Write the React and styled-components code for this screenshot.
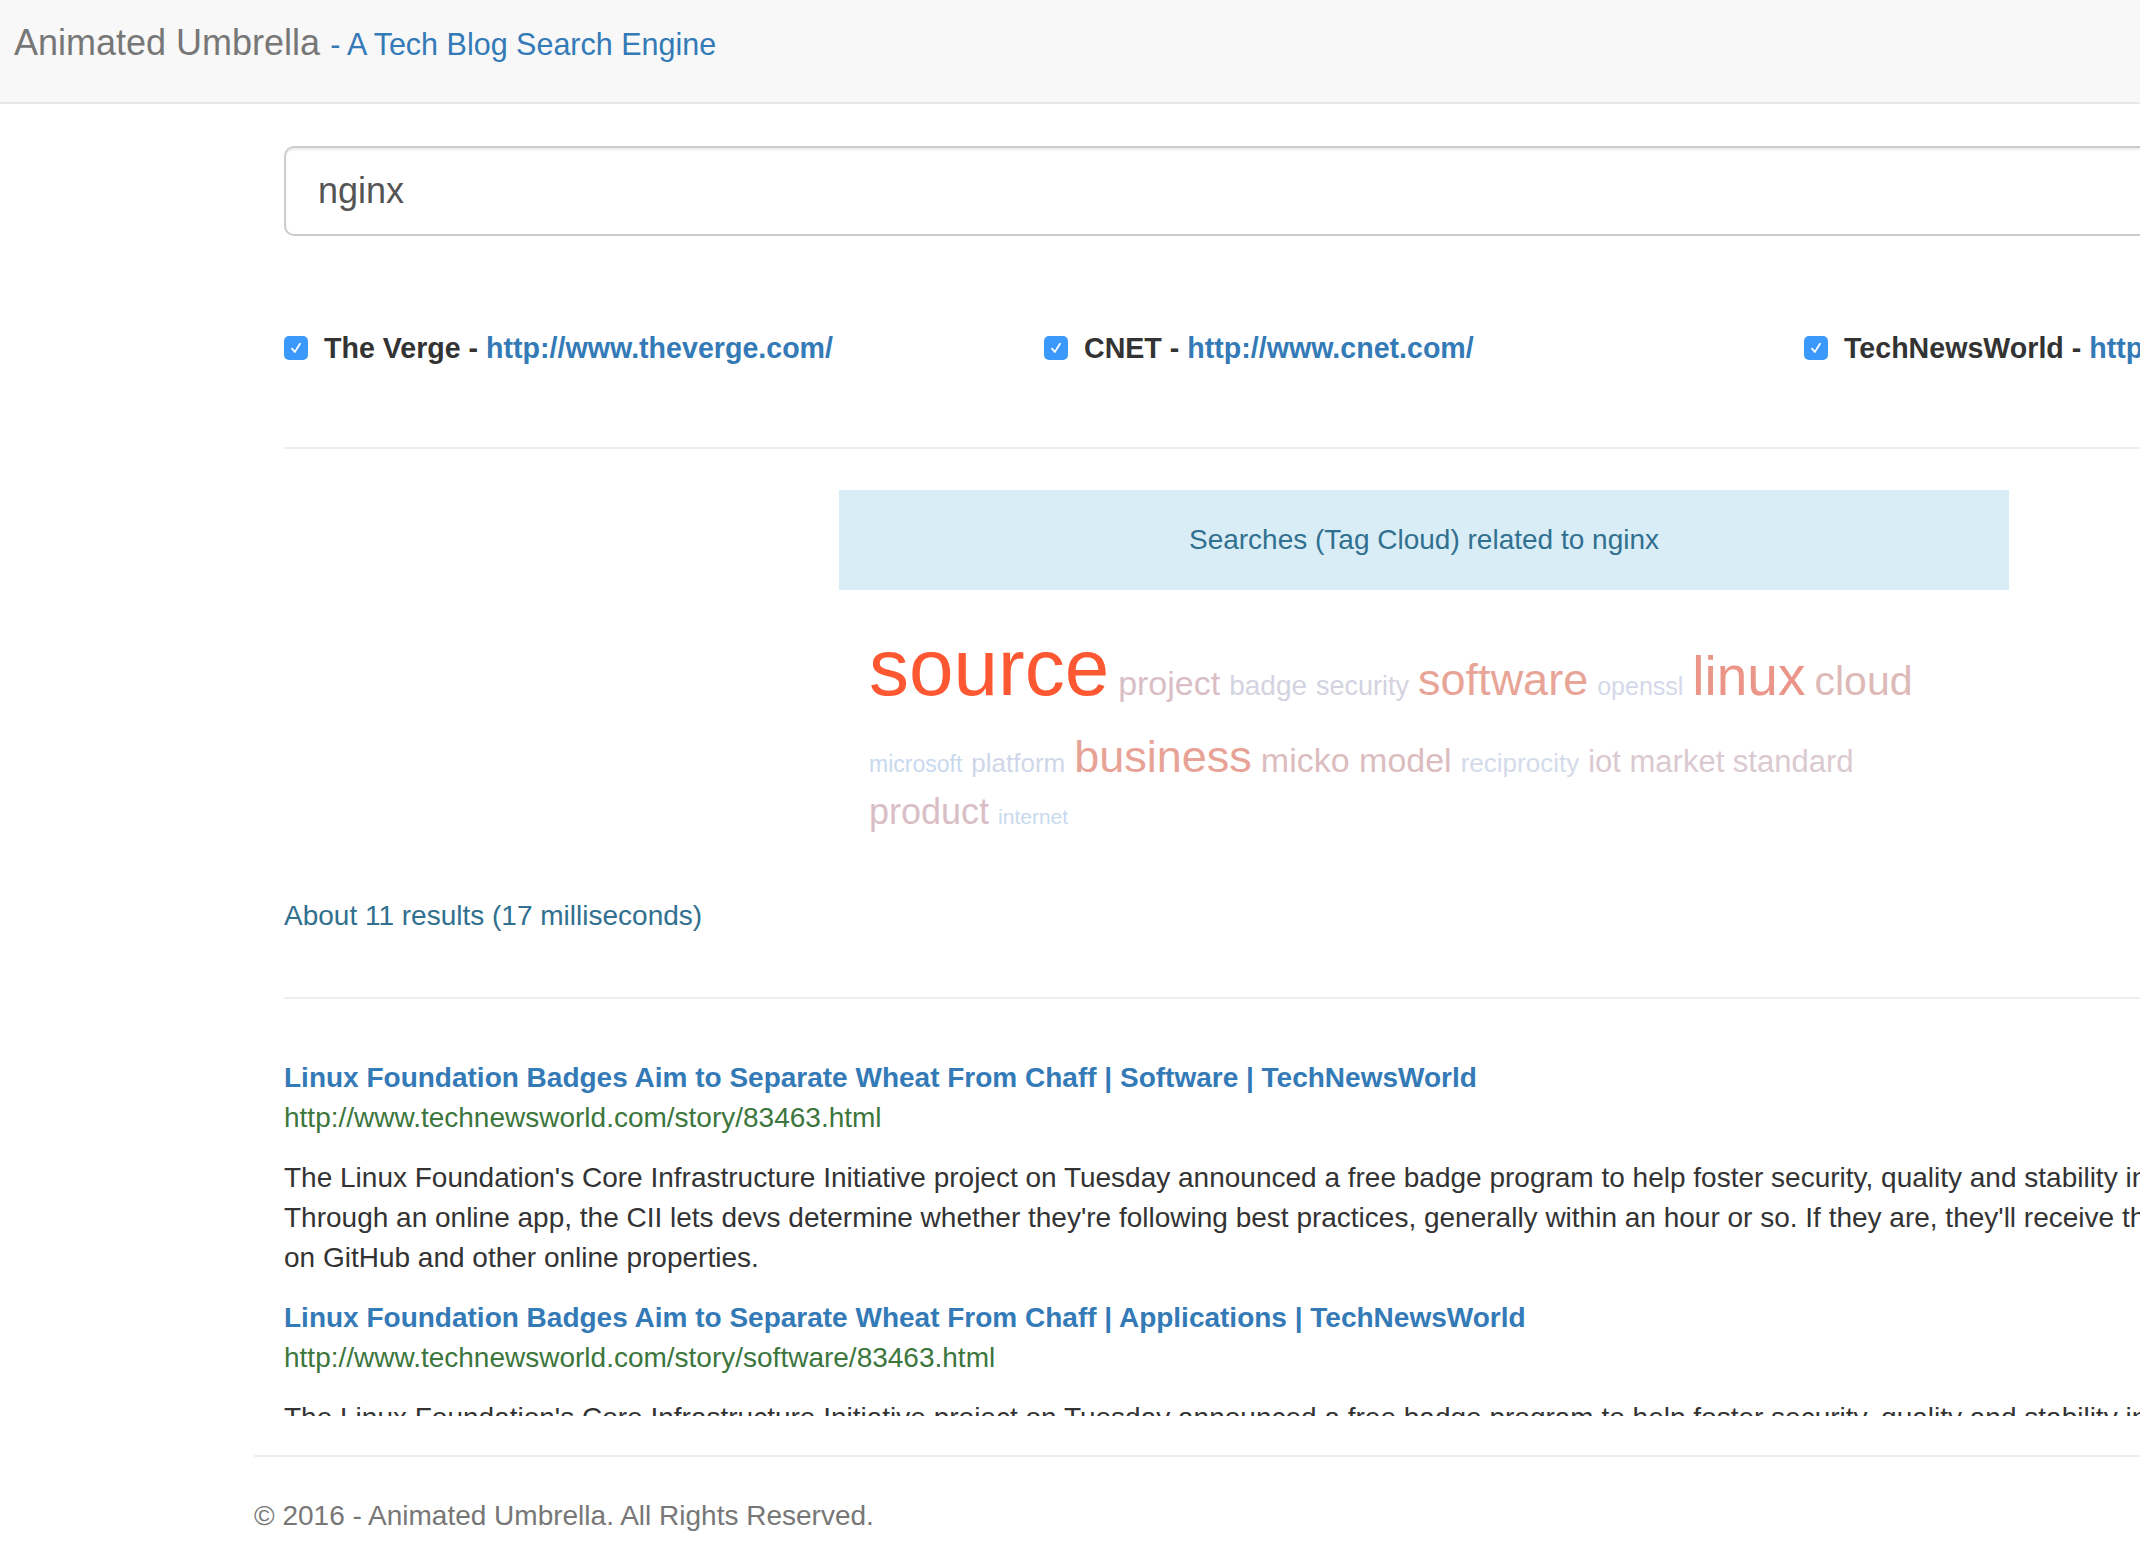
import React from "react";
import styled, { createGlobalStyle } from "styled-components";

const GlobalStyle = createGlobalStyle`
  * {
    box-sizing: border-box;
  }
  html,
  body {
    margin: 0;
    padding: 0;
    overflow: hidden;
    background: #fff;
  }
  body {
    font-family: "Liberation Sans", Helvetica, Arial, sans-serif;
    font-size: 28px;
    line-height: 40px;
    color: #333;
  }
`;

const Navbar = styled.nav`
  height: 104px;
  background-color: #f8f8f8;
  border-bottom: 2px solid #e7e7e7;
  padding: 23px 0 0 14px;
`;

const Brand = styled.a`
  display: block;
  font-size: 36px;
  line-height: 40px;
  color: #777;
  text-decoration: none;
  white-space: nowrap;
`;

const Tagline = styled.span`
  font-size: 30.5px;
  color: #337ab7;
`;

const Container = styled.div`
  width: 2340px;
  margin-left: 224px;
  padding: 0 30px;
`;

const Main = styled.main`
  padding: 0 30px;
`;

const SearchInput = styled.input`
  display: block;
  width: 100%;
  height: 90px;
  margin: 42px 0 0;
  padding: 0 32px;
  font: inherit;
  font-size: 36px;
  color: #555;
  background-color: #fff;
  border: 2px solid #ccc;
  border-radius: 10px;
  box-shadow: inset 0 2px 2px rgba(0, 0, 0, 0.075);
  outline: none;
`;

const Sources = styled.div`
  display: flex;
  margin: 92px -30px 0;
`;

const Source = styled.label`
  flex: 0 0 760px;
  padding: 0 30px;
  display: flex;
  align-items: center;
  gap: 16px;
  font-size: 28.6px;
  font-weight: bold;
  line-height: 40px;
  white-space: nowrap;
`;

const CheckBox = styled.span`
  flex: none;
  width: 24px;
  height: 24px;
  border-radius: 5px;
  background-color: #3b99fc;
  display: inline-flex;
  align-items: center;
  justify-content: center;
`;

const SourceLink = styled.a`
  color: #337ab7;
  text-decoration: none;
`;

const Rule = styled.hr`
  border: 0;
  border-top: 2px solid #eee;
  margin: ${(props) => props.$top}px 0 0;
`;

const TagPanel = styled.section`
  width: 1170px;
  margin: 41px 0 0 555px;
`;

const TagHeader = styled.div`
  height: 100px;
  line-height: 100px;
  background-color: #d9edf7;
  color: #31708f;
  text-align: center;
`;

const Cloud = styled.div`
  padding: 0 30px;
`;

const CloudRow = styled.div`
  display: flex;
  align-items: baseline;
  gap: 9px;
  margin-top: ${(props) => props.$top}px;
  white-space: nowrap;
`;

const Word = styled.span`
  font-size: ${(props) => props.$size}px;
  line-height: 1;
  color: ${(props) => props.$color};
`;

const ResultCount = styled.div`
  margin-top: 66px;
  color: #31708f;
`;

const ResultsBox = styled.div`
  height: 417px;
  padding-top: 39px;
  overflow: hidden;
`;

const Result = styled.article`
  margin-top: 20px;
`;

const ResultTitle = styled.a`
  display: block;
  font-weight: bold;
  color: #337ab7;
  text-decoration: none;
  white-space: nowrap;
`;

const ResultUrl = styled.div`
  color: #3c763d;
  white-space: nowrap;
`;

const ResultText = styled.p`
  margin: 20px 0 0;
`;

const Footer = styled.footer`
  color: #777;
`;

const FooterText = styled.p`
  margin: 39px 0 0;
`;

const sources = [
  { name: "The Verge", url: "http://www.theverge.com/" },
  { name: "CNET", url: "http://www.cnet.com/" },
  { name: "TechNewsWorld", url: "http://www.technewsworld.com/" },
];

const cloud = [
  {
    top: 38,
    words: [
      ["source", 80, "#fd5831"],
      ["project", 34, "#d9bec5"],
      ["badge", 28, "#d4d3e1"],
      ["security", 27, "#d4d3e1"],
      ["software", 45, "#e8a597"],
      ["openssl", 25, "#d5d8ea"],
      ["linux", 55, "#eb9488"],
      ["cloud", 41, "#ddb9b8"],
    ],
  },
  {
    top: 26,
    words: [
      ["microsoft", 23, "#c8d9ee"],
      ["platform", 26, "#d0d6ea"],
      ["business", 45, "#e8a397"],
      ["micko model", 34, "#dcbdbf"],
      ["reciprocity", 26, "#d3dbea"],
      ["iot market standard", 31, "#dac9d0"],
    ],
  },
  {
    top: 15,
    words: [
      ["product", 36, "#d9bec6"],
      ["internet", 21, "#c7daee"],
    ],
  },
];

const description = [
  "The Linux Foundation's Core Infrastructure Initiative project on Tuesday announced a free badge program to help foster security, quality and stability in open source software.",
  "Through an online app, the CII lets devs determine whether they're following best practices, generally within an hour or so. If they are, they'll receive the badge to display",
  "on GitHub and other online properties.",
];

const results = [
  {
    title:
      "Linux Foundation Badges Aim to Separate Wheat From Chaff | Software | TechNewsWorld",
    url: "http://www.technewsworld.com/story/83463.html",
  },
  {
    title:
      "Linux Foundation Badges Aim to Separate Wheat From Chaff | Applications | TechNewsWorld",
    url: "http://www.technewsworld.com/story/software/83463.html",
  },
];

function Checked() {
  return (
    <CheckBox>
      <svg width="16" height="16" viewBox="0 0 16 16">
        <path
          d="M4 8.6 L6.8 12 L12 3.8"
          fill="none"
          stroke="#fff"
          strokeWidth="1.8"
          strokeLinecap="round"
          strokeLinejoin="round"
        />
      </svg>
    </CheckBox>
  );
}

export default function App() {
  return (
    <>
      <GlobalStyle />
      <Navbar>
        <Brand href="#">
          Animated Umbrella <Tagline>- A Tech Blog Search Engine</Tagline>
        </Brand>
      </Navbar>
      <Container>
        <Main>
          <SearchInput type="text" defaultValue="nginx" />

          <Sources>
            {sources.map((s) => (
              <Source key={s.name}>
                <Checked />
                <span>
                  {s.name} - <SourceLink href={s.url}>{s.url}</SourceLink>
                </span>
              </Source>
            ))}
          </Sources>

          <Rule $top={79} />

          <TagPanel>
            <TagHeader>Searches (Tag Cloud) related to nginx</TagHeader>
            <Cloud>
              {cloud.map((row, i) => (
                <CloudRow key={i} $top={row.top}>
                  {row.words.map(([text, size, color]) => (
                    <Word key={text} $size={size} $color={color}>
                      {text}
                    </Word>
                  ))}
                </CloudRow>
              ))}
            </Cloud>
          </TagPanel>

          <ResultCount>About 11 results (17 milliseconds)</ResultCount>

          <Rule $top={61} />

          <ResultsBox>
            {results.map((r) => (
              <Result key={r.url}>
                <ResultTitle href={r.url}>{r.title}</ResultTitle>
                <ResultUrl>{r.url}</ResultUrl>
                <ResultText>
                  {description[0]}
                  <br />
                  {description[1]}
                  <br />
                  {description[2]}
                </ResultText>
              </Result>
            ))}
          </ResultsBox>
        </Main>

        <Footer>
          <Rule $top={39} />
          <FooterText>© 2016 - Animated Umbrella. All Rights Reserved.</FooterText>
        </Footer>
      </Container>
    </>
  );
}
